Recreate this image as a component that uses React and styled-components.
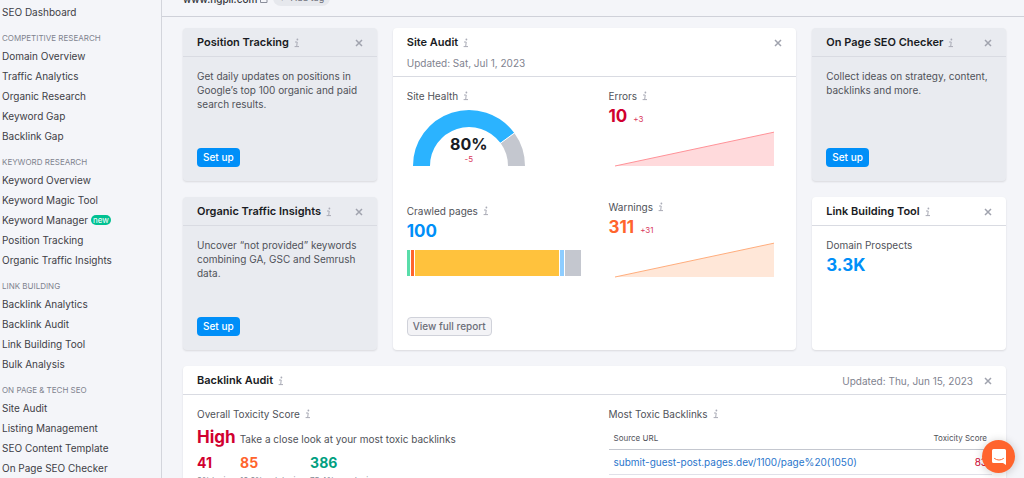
import styled, { createGlobalStyle } from "styled-components";

const GlobalStyle = createGlobalStyle`
  * {
    box-sizing: border-box;
  }
  body {
    margin: 0;
    background: #f4f5f9;
    color: #505259;
    font-family: Inter, "Liberation Sans", sans-serif;
    font-size: 10px;
    line-height: 14px;
    overflow: hidden;
  }
  h2, h3, h4, p, ul {
    margin: 0;
    padding: 0;
    font-size: inherit;
    font-weight: inherit;
  }
  button {
    font-family: inherit;
    cursor: pointer;
  }
`;

const menu = [
  { items: ["SEO Dashboard"] },
  {
    label: "Competitive research",
    items: ["Domain Overview", "Traffic Analytics", "Organic Research", "Keyword Gap", "Backlink Gap"],
  },
  {
    label: "Keyword research",
    items: ["Keyword Overview", "Keyword Magic Tool", "Keyword Manager", "Position Tracking", "Organic Traffic Insights"],
  },
  {
    label: "Link building",
    items: ["Backlink Analytics", "Backlink Audit", "Link Building Tool", "Bulk Analysis"],
  },
  {
    label: "On page & tech SEO",
    items: ["Site Audit", "Listing Management", "SEO Content Template", "On Page SEO Checker"],
  },
];

const crawled = [
  { name: "Healthy", share: 3, color: "#59ddaa" },
  { name: "Broken", share: 3, color: "#ff642d" },
  { name: "Have issues", share: 144, color: "#ffc23d" },
  { name: "Redirects", share: 4, color: "#8ecdff" },
  { name: "Blocked", share: 16, color: "#c4c7cf" },
];

const toxicity = [
  { value: "41", text: "8% toxic", color: "#d1002f" },
  { value: "85", text: "16.6% pot. toxic", color: "#ff642d" },
  { value: "386", text: "75.4% non-toxic", color: "#009f81" },
];

const Info = () => (
  <InfoIcon viewBox="0 0 6 10" width="6" height="10" aria-hidden="true">
    <path d="M1 4h2.200L2.700 8.500M0.600 8.600h4.400" />
    <circle cx="3.400" cy="1.500" r="0.900" />
  </InfoIcon>
);

const Close = ({ label }) => (
  <CloseButton type="button" aria-label={`Close ${label}`}>
    <svg viewBox="0 0 8 8" width="8" height="8">
      <path d="M1 1l6 6M7 1L1 7" />
    </svg>
  </CloseButton>
);

const WidgetHead = ({ title, note, noteBelow }) => (
  <Head>
    <Title>{title}</Title>
    <Info />
    <HeadEnd>
      {note && !noteBelow && <Note>{note}</Note>}
      <Close label={title} />
    </HeadEnd>
    {noteBelow && <NoteBelow>{note}</NoteBelow>}
  </Head>
);

const SetupWidget = ({ title, text }) => (
  <Card $muted>
    <WidgetHead title={title} />
    <CardBody>
      <p>{text}</p>
      <PrimaryButton type="button">Set up</PrimaryButton>
    </CardBody>
  </Card>
);

const Trend = ({ fill, stroke }) => (
  <TrendSvg viewBox="0 0 160 36" preserveAspectRatio="none" aria-hidden="true">
    <path d="M0 35L160 1V35Z" fill={fill} />
    <path d="M0 35L160 1" fill="none" stroke={stroke} />
  </TrendSvg>
);

const Gauge = () => (
  <GaugeBox>
    <svg viewBox="0 0 114 57" width="114" height="57" aria-hidden="true">
      <path d="M9.500 57A47.500 47.500 0 0 1 95.430 29.080" fill="none" stroke="#2bb3ff" strokeWidth="17" />
      <path d="M95.430 29.080A47.500 47.500 0 0 1 104.500 57" fill="none" stroke="#c4c7cf" strokeWidth="17" />
      <path d="M88 34.500L103.500 23.200" stroke="#fff" />
    </svg>
    <GaugeText>
      <strong>80%</strong>
      <Delta>-5</Delta>
    </GaugeText>
  </GaugeBox>
);

export default function App() {
  return (
    <Page>
      <GlobalStyle />
      <Sidebar>
        {menu.map((group) => (
          <div key={group.items[0]}>
            {group.label && <GroupLabel>{group.label}</GroupLabel>}
            <MenuList>
              {group.items.map((item) => (
                <li key={item}>
                  <MenuLink href="#">{item}</MenuLink>
                  {item === "Keyword Manager" && <Badge>new</Badge>}
                </li>
              ))}
            </MenuList>
          </div>
        ))}
      </Sidebar>

      <Main>
        <ProjectBar>
          <ProjectLink href="#">
            www.ngpil.com
            <svg viewBox="0 0 8 8" width="8" height="8" aria-hidden="true">
              <path d="M3 1H0.500V7.500H7V5M4.500 0.500H7.500V3.500M7.500 0.500L4 4" />
            </svg>
          </ProjectLink>
          <TagButton type="button">
            <span>+</span> Add tag
          </TagButton>
        </ProjectBar>

        <Widgets>
          <SetupWidget
            title="Position Tracking"
            text="Get daily updates on positions in Google’s top 100 organic and paid search results."
          />

          <Card $cols={2} $rows={2}>
            <WidgetHead title="Site Audit" note="Updated: Sat, Jul 1, 2023" noteBelow />
            <CardBody>
              <Columns>
                <Metrics $gap={38}>
                  <section>
                    <Label>Site Health <Info /></Label>
                    <Gauge />
                  </section>
                  <section>
                    <Label>Crawled pages <Info /></Label>
                    <Value $color="#008ff8">100</Value>
                    <StackBar>
                      {crawled.map((part) => (
                        <StackPart key={part.name} title={part.name} style={{ flexGrow: part.share, background: part.color }} />
                      ))}
                    </StackBar>
                  </section>
                </Metrics>
                <Metrics $gap={33}>
                  <section>
                    <Label>Errors <Info /></Label>
                    <ValueRow>
                      <Value $color="#d1002f">10</Value>
                      <Delta>+3</Delta>
                    </ValueRow>
                    <Trend fill="#ffdadc" stroke="#ff9298" />
                  </section>
                  <section>
                    <Label>Warnings <Info /></Label>
                    <ValueRow>
                      <Value $color="#ff642d">311</Value>
                      <Delta>+31</Delta>
                    </ValueRow>
                    <Trend fill="#ffe7d8" stroke="#ffad7c" />
                  </section>
                </Metrics>
              </Columns>
              <SecondaryButton type="button">View full report</SecondaryButton>
            </CardBody>
          </Card>

          <SetupWidget title="On Page SEO Checker" text="Collect ideas on strategy, content, backlinks and more." />
          <SetupWidget
            title="Organic Traffic Insights"
            text="Uncover “not provided” keywords combining GA, GSC and Semrush data."
          />

          <Card>
            <WidgetHead title="Link Building Tool" />
            <CardBody>
              <Label>Domain Prospects</Label>
              <Value $color="#008ff8">3.3K</Value>
            </CardBody>
          </Card>

          <Card $cols={4}>
            <WidgetHead title="Backlink Audit" note="Updated: Thu, Jun 15, 2023" />
            <CardBody>
              <Columns>
                <section>
                  <Label>Overall Toxicity Score <Info /></Label>
                  <Verdict>
                    <Value $color="#d1002f">High</Value>
                    <p>Take a close look at your most toxic backlinks</p>
                  </Verdict>
                  <Scores>
                    {toxicity.map((score) => (
                      <div key={score.value}>
                        <ScoreValue $color={score.color}>{score.value}</ScoreValue>
                        <ScoreText>{score.text}</ScoreText>
                      </div>
                    ))}
                  </Scores>
                </section>
                <section>
                  <Label>Most Toxic Backlinks <Info /></Label>
                  <Table>
                    <thead>
                      <tr>
                        <th>Source URL</th>
                        <th>Toxicity Score</th>
                      </tr>
                    </thead>
                    <tbody>
                      <tr>
                        <td>
                          <a href="#">submit-guest-post.pages.dev/1100/page%20(1050)</a>
                        </td>
                        <td>83</td>
                      </tr>
                    </tbody>
                  </Table>
                </section>
              </Columns>
            </CardBody>
          </Card>
        </Widgets>
      </Main>

      <ChatButton type="button" aria-label="Open chat">
        <svg viewBox="0 0 16 18" width="16" height="18" aria-hidden="true">
          <path d="M2.500 1H13.500Q15 1 15 2.500V17L12 15H2.500Q1 15 1 13.500V2.500Q1 1 2.500 1Z" fill="#fff" />
          <path d="M3.500 10.500Q8 13.800 12.500 10.500" fill="none" stroke="#ff642d" strokeLinecap="round" />
        </svg>
      </ChatButton>
    </Page>
  );
}

const Page = styled.div`
  display: flex;
  height: 100vh;
  overflow: hidden;
`;

const Sidebar = styled.nav`
  flex: 0 0 162px;
  padding: 2px;
  border-right: 1px solid #d3d5dc;
`;

const GroupLabel = styled.h4`
  margin-top: 8px;
  font-size: 8px;
  line-height: 16px;
  color: #7f838f;
  text-transform: uppercase;
`;

const MenuList = styled.ul`
  list-style: none;

  li {
    display: flex;
    align-items: center;
    gap: 3px;
    height: 20px;
  }
`;

const MenuLink = styled.a`
  color: #3e4046;
  text-decoration: none;
  white-space: nowrap;
`;

const Badge = styled.span`
  padding: 0 2px;
  border-radius: 5px;
  background: #00c192;
  color: #fff;
  font-size: 8px;
  line-height: 10px;
`;

const Main = styled.main`
  flex: 1;
  min-width: 0;
`;

/* the bar is scrolled up, only its lower part is on screen */
const ProjectBar = styled.header`
  display: flex;
  align-items: flex-end;
  gap: 5px;
  height: 17px;
  padding: 0 21px 10px;
  border-bottom: 1px solid #cfd1d9;
`;

const ProjectLink = styled.a`
  display: flex;
  align-items: center;
  gap: 3px;
  color: #33353b;
  font-weight: 500;
  text-decoration: none;

  svg {
    fill: none;
    stroke: #8a8e9b;
  }
`;

const TagButton = styled.button`
  padding: 0 6px;
  border: none;
  border-radius: 8px;
  background: #e6e8ed;
  color: #6c6e79;
  font-size: 9px;
  line-height: 16px;
  white-space: nowrap;

  span {
    margin-right: 3px;
  }
`;

const Widgets = styled.div`
  display: grid;
  grid-template-columns: repeat(4, minmax(0, 1fr));
  grid-auto-rows: minmax(153px, auto);
  gap: 16px;
  padding: 11px 18px 16px 21px;
`;

const Card = styled.article`
  display: flex;
  flex-direction: column;
  grid-column: span ${(p) => p.$cols || 1};
  grid-row: span ${(p) => p.$rows || 1};
  border-radius: 4px;
  background: ${(p) => (p.$muted ? "#e9ebf0" : "#fff")};
  box-shadow: 0 1px 2px rgba(25, 27, 35, 0.12);
`;

const Head = styled.header`
  display: flex;
  flex-wrap: wrap;
  align-items: center;
  column-gap: 5px;
  padding: 7px 14px 6px;
  border-bottom: 1px solid #d9dbe2;
`;

const Title = styled.h2`
  color: #191b23;
  font-size: 11px;
  font-weight: 600;
  line-height: 15px;
`;

const HeadEnd = styled.div`
  display: flex;
  align-items: center;
  gap: 11px;
  margin-left: auto;
`;

const Note = styled.p`
  color: #7f838f;
`;

const NoteBelow = styled(Note)`
  flex-basis: 100%;
  padding-top: 6px;
`;

const InfoIcon = styled.svg`
  flex: none;
  fill: #a9abb6;

  path {
    fill: none;
    stroke: #a9abb6;
  }
`;

const CloseButton = styled.button`
  display: flex;
  padding: 0;
  border: none;
  background: none;

  svg {
    fill: none;
    stroke: #a0a3ae;
    stroke-width: 1.5;
  }
`;

const CardBody = styled.div`
  display: flex;
  flex: 1;
  flex-direction: column;
  padding: 12px 14px 14px;
`;

const Columns = styled.div`
  display: grid;
  grid-template-columns: 1fr 1fr;
  gap: 28px;
`;

const Metrics = styled.div`
  display: flex;
  flex-direction: column;
  gap: ${(p) => p.$gap}px;
`;

const Label = styled.h3`
  display: flex;
  align-items: center;
  gap: 5px;
`;

const Value = styled.strong`
  display: block;
  color: ${(p) => p.$color};
  font-size: 17px;
  font-weight: 700;
  line-height: 26px;
`;

const ValueRow = styled.div`
  display: flex;
  align-items: baseline;
  gap: 6px;
`;

const Delta = styled.span`
  color: #d9395c;
  font-size: 8px;
  line-height: 10px;
`;

const TrendSvg = styled.svg`
  display: block;
  width: calc(100% - 14px);
  height: 36px;
  margin: 2px 7px 0 6px;
`;

const GaugeBox = styled.div`
  position: relative;
  width: 114px;
  margin: 6px 0 0 5px;

  svg {
    display: block;
  }
`;

const GaugeText = styled.div`
  position: absolute;
  inset: auto 0 2px;
  display: flex;
  flex-direction: column;
  align-items: center;

  strong {
    color: #191b23;
    font-size: 16px;
    font-weight: 700;
    line-height: 20px;
  }
`;

const StackBar = styled.div`
  display: flex;
  gap: 1px;
  height: 26px;
  margin-top: 6px;
`;

const StackPart = styled.span`
  flex-basis: 0;
`;

const PrimaryButton = styled.button`
  align-self: flex-start;
  margin-top: auto;
  padding: 0 6px;
  border: none;
  border-radius: 4px;
  background: #008ff8;
  color: #fff;
  font-size: 10px;
  font-weight: 500;
  line-height: 19px;
`;

const SecondaryButton = styled(PrimaryButton)`
  padding: 0 5px;
  border: 1px solid #d0d2da;
  background: #f3f3f6;
  color: #6c6e79;
  line-height: 17px;
`;

const Verdict = styled.div`
  display: flex;
  align-items: baseline;
  gap: 4px;
  margin-top: 3px;
`;

const Scores = styled.div`
  display: flex;
  gap: 10px;
  margin-top: 4px;
`;

const ScoreValue = styled.strong`
  display: block;
  color: ${(p) => p.$color};
  font-size: 14px;
  font-weight: 700;
  line-height: 18px;
`;

const ScoreText = styled.span`
  color: #868a94;
  font-size: 8px;
`;

const Table = styled.table`
  width: 100%;
  margin-top: 6px;
  border-collapse: collapse;

  th {
    padding: 4px 5px;
    border-bottom: 1px solid #c4c7cf;
    font-size: 8px;
    font-weight: 400;
    text-align: left;
  }
  td {
    padding: 5px;
    border-bottom: 1px solid #e0e1e9;
    color: #d1002f;
  }
  th:last-child, td:last-child {
    text-align: right;
  }
  a {
    color: #2a76cc;
    text-decoration: none;
  }
`;

const ChatButton = styled.button`
  position: fixed;
  right: 9px;
  bottom: 5px;
  display: flex;
  align-items: center;
  justify-content: center;
  width: 33px;
  height: 33px;
  padding: 0;
  border: none;
  border-radius: 50%;
  background: #ff642d;
  box-shadow: 0 1px 10px rgba(0, 0, 0, 0.2);
`;
